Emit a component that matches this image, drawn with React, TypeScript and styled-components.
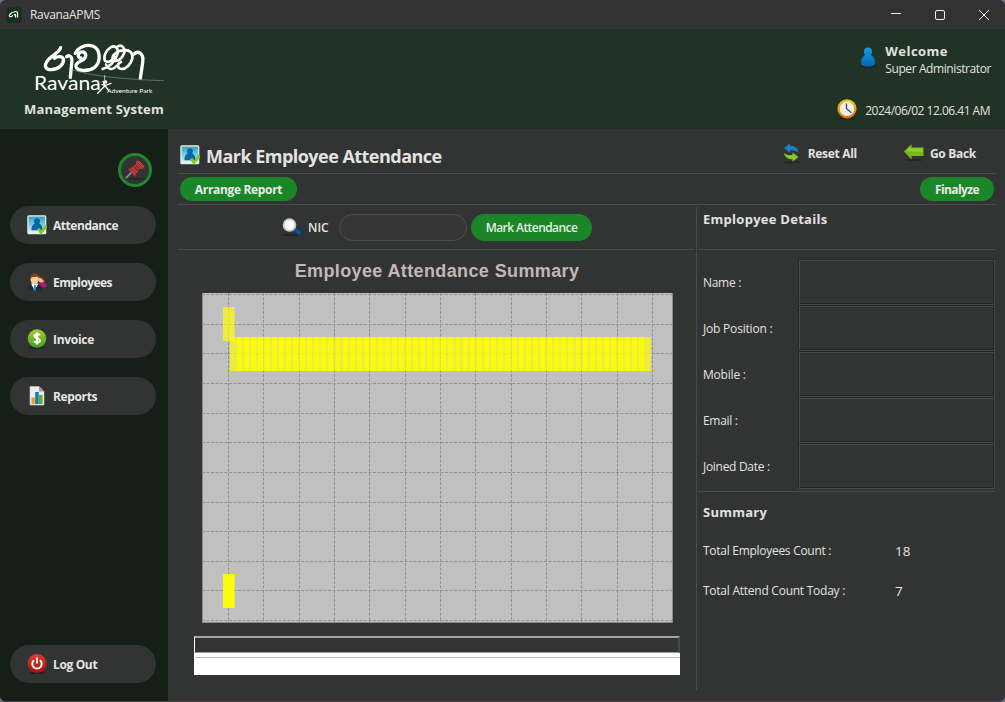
import React from "react";
import styled, { createGlobalStyle } from "styled-components";

const Global = createGlobalStyle`
  * { box-sizing: border-box; }
  html, body { margin: 0; padding: 0; overflow: hidden; background: #6f7488; }
  body { font-family: "Open Sans", "Noto Sans", sans-serif; color: #e2e2e2; font-size: 12px; }
  svg { display: block; flex: none; }
`;

const Window = styled.div`
  width: 1005px; height: 702px; display: flex; flex-direction: column;
  background: #323433; border-bottom: 1px solid #4b4142; border-radius: 6px; overflow: hidden;
`;
const TitleBar = styled.div`
  height: 29px; flex: none; display: flex; align-items: center; background: #333333; padding: 0 9px 0 6px;
`;
const WindowTitle = styled.div`
  margin-left: 8px; letter-spacing: -.3px; line-height: 18px;
`;
const WindowButtons = styled.div`
  margin-left: auto; display: flex; gap: 28px; align-items: center; padding-right: 4px;
`;
const Header = styled.header`
  height: 100px; flex: none; background: #203324; display: flex; justify-content: space-between;
`;
const Brand = styled.div`
  padding: 11px 0 0 24px; display: flex; flex-direction: column;
`;
const LogoSvg = styled.svg`margin-left: 4px;`;
const Session = styled.div`
  padding: 13px 13px 0 0; display: flex; flex-direction: column;
`;
const SessionRow = styled.div<{ $top?: number; $gap: number; $right?: number }>`
  display: flex; align-items: center; justify-content: flex-end; gap: ${p => p.$gap}px;
  margin-top: ${p => p.$top ?? 0}px; padding-right: ${p => p.$right ?? 0}px;
`;
const UserMark = styled.div`padding-bottom: 5px;`;
const Label = styled.div<{ $size?: number; $bold?: number; $track?: number; $line?: number; $width?: number; $drop?: number }>`
  font-size: ${p => p.$size ?? 12}px; font-weight: ${p => p.$bold ?? 400}; letter-spacing: ${p => p.$track ?? 0}px;
  line-height: ${p => p.$line ?? 18}px; white-space: nowrap; padding-top: ${p => p.$drop ?? 0}px;
  ${p => p.$width ? `width: ${p.$width}px; flex: none;` : ""}
`;
const Body = styled.div`flex: 1; display: flex; min-height: 0;`;
const Sidebar = styled.nav`
  width: 168px; flex: none; background: #161f17; padding: 24px 12px 18px 10px; display: flex; flex-direction: column;
`;
const PinButton = styled.button`
  width: 34px; height: 34px; border-radius: 50%; border: 3px solid #1d8729; background: #323433;
  padding: 0; margin: 0 4px 19px auto; display: grid; place-items: center; flex: none;
`;
const NavButton = styled.button<{ $last?: boolean }>`
  width: 146px; height: 38px; flex: none; border: 0; border-radius: 19px; background: #323433; color: #e6e6e6;
  font: 700 12px/18px "Open Sans", "Noto Sans", sans-serif; display: flex; align-items: center; gap: 6px;
  padding: 0 0 0 17px; margin: ${p => p.$last ? "auto 0 0" : "0 0 19px"}; text-align: left;
`;
const NavText = styled.span<{ $track: number }>`letter-spacing: ${p => p.$track}px; padding-top: 1px;`;
const Main = styled.main`flex: 1; padding: 0 9px 0 10px; display: flex; flex-direction: column;`;
const Heading = styled.div`
  height: 45px; border-bottom: 1px solid #4a4c4b; display: flex; align-items: center; padding: 8px 20px 0 2px;
`;
const PageTitle = styled.h1`
  margin: 0 auto 0 6px; padding-top: 2px; font-size: 18px; font-weight: 700; line-height: 24px; letter-spacing: -.53px; white-space: nowrap;
`;
const Tool = styled.div<{ $left: number }>`
  display: flex; align-items: center; gap: 6px; margin: -4px 0 0 ${p => p.$left}px;
`;
const Actions = styled.div`
  height: 31px; border-bottom: 1px solid #4a4c4b; display: flex; justify-content: space-between;
  align-items: center; padding: 0 2px;
`;
const GreenButton = styled.button<{ $w: number; $h: number; $weight: number; $track: number }>`
  width: ${p => p.$w}px; height: ${p => p.$h}px; border: 0; border-radius: 14px; background: #1b8627; color: #e8eee8;
  font: ${p => p.$weight} 12px/18px "Open Sans", "Noto Sans", sans-serif; letter-spacing: ${p => p.$track}px; padding: 2px 0 0; white-space: nowrap;
`;
const Columns = styled.div`flex: 1; display: flex; min-height: 0;`;
const ChartColumn = styled.section`width: 518px; display: flex; flex-direction: column; flex: none;`;
const SearchRow = styled.div`
  height: 45px; border-bottom: 1px solid #4a4c4b; display: flex; align-items: center; padding-left: 104px; margin-right: 2px; flex: none;
`;
const NicLabel = styled.label`
  width: 31px; padding: 2px 0 0 6px; font-weight: 600; line-height: 18px; white-space: nowrap;
`;
const NicInput = styled.input`
  width: 128px; height: 27px; border: 1px solid #4e4f4f; border-radius: 14px; background: #363636; margin: 0 4px 0 6px; padding: 0 10px; color: #e2e2e2;
`;
const ChartTitle = styled.h2`
  margin: 11px 0 0; height: 32px; text-align: center; font: 700 18px/20px "Liberation Sans", Arial, sans-serif; color: #c3b8b8; letter-spacing: .38px;
`;
const Plot = styled.div`margin-left: 24px; height: 330px;`;
const Legend = styled.div`
  margin: 13px 0 0 16px; width: 486px; height: 39px; background: #fff; display: flex; flex-direction: column;
`;
const LegendBox = styled.div`
  height: 17px; background: #323433; border-top: 2px solid #a3a4a3; border-left: 1px solid #fff; border-right: 2px solid #494b4a; border-bottom: 1px solid #969896;
`;
const LegendLine = styled.div`height: 1px; background: #b9b9b9; margin: 4px 0 0 1px;`;
const Details = styled.section`
  margin: 2px 1px 11px 0; border-left: 1px solid #4a4c4b; flex: 1; padding-left: 1px; display: flex; flex-direction: column;
`;
const DetailTitle = styled.div<{ $h: number; $top: number; $line?: boolean }>`
  height: ${p => p.$h}px; flex: none; padding: ${p => p.$top}px 0 0 5px; border-bottom: ${p => p.$line ? "1px solid #4a4c4b" : "0"};
`;
const Fields = styled.div`
  height: 242px; flex: none; border-bottom: 1px solid #4a4c4b; padding: 9px 0 0 5px; display: flex; flex-direction: column;
`;
const Field = styled.div`height: 46px; display: flex; align-items: center;`;
const ValueBox = styled.div`
  width: 197px; height: 46px; margin-left: auto; border: 1px solid #242625; border-right-color: #484a49; border-bottom-color: #484a49;
  display: flex;
`;
const ValueInner = styled.div`flex: 1; border: 1px solid #484a49; border-right-color: #242625; border-bottom-color: #242625;`;
const CountRow = styled.div`height: 40px; display: flex; align-items: center; padding-left: 5px;`;

function Logo() {
  return (
    <LogoSvg width="140" height="58" viewBox="84 120 420 174">
      <g fill="none" stroke="#fff" strokeLinecap="round" strokeLinejoin="round" strokeWidth="10">
        <path d="M182 143C178 158 156 166 144 180C130 198 136 209 154 209C177 208 193 192 190 177C187 168 173 168 163 175" />
        <path d="M200 170C211 162 218 173 215 190L211 232" />
        <path d="M226 160C233 142 258 132 278 138C303 148 303 185 284 202C265 216 231 214 228 199C226 186 244 185 252 177C262 167 256 153 244 156C232 160 232 174 243 174" />
        <path strokeWidth="8" d="M308 207C330 200 345 184 352 164C357 145 346 134 332 142C318 150 309 170 315 182C325 191 338 180 344 171" />
        <path strokeWidth="8" d="M350 142C365 129 377 145 372 160C367 176 350 188 340 180C332 166 353 151 370 151C391 148 399 160 397 175C392 194 379 207 365 207C351 206 350 191 363 186" />
        <path strokeWidth="7" d="M318 193C325 211 340 211 350 197" />
        <path d="M401 163C417 149 432 162 428 188L421 235" />
        <path stroke="#7f9083" strokeWidth="2" d="M215 209C270 227 365 238 490 242" />
        <path strokeWidth="4" d="M293 280L315 257L309 244M315 257L333 250M315 257L327 273M306 253L315 257" />
        <path strokeWidth="2" d="M314 226V254" />
      </g>
      <circle cx="317" cy="246" r="5" fill="#fff" />
      <text x="102" y="269" fill="#fff" fontFamily="Lato" fontSize="58" textLength="200" lengthAdjust="spacingAndGlyphs">Ravana</text>
      <text x="321" y="280" fill="#fff" fontFamily="Lato" fontSize="19" textLength="136" lengthAdjust="spacingAndGlyphs">Adventure Park</text>
    </LogoSvg>
  );
}

function AttendanceIcon() {
  return (
    <svg width="20" height="20" viewBox="0 0 20 20">
      <defs><linearGradient id="sky" x2="0" y2="1"><stop stopColor="#35a4bd" /><stop offset="1" stopColor="#b5edf4" /></linearGradient></defs>
      <rect x=".3" y=".3" width="19" height="19" rx="1.5" fill="#e8eeee" />
      <rect x="1.6" y="1.6" width="16.5" height="14.6" fill="url(#sky)" />
      <path d="M10 3.2c-3 0-3.8 3-2.2 5.3C5 9.8 4.3 12 4.5 15.2h11c.2-3.2-.5-5.4-3.3-6.7C13.8 6.2 13 3.2 10 3.2Z" fill="#0a63ad" />
      <path d="m11 13.500 3 4 5.500-7" fill="none" stroke="#80c91e" strokeWidth="2.8" />
    </svg>
  );
}
function PinIcon() {
  return (
    <svg width="22" height="22" viewBox="0 0 22 22">
      <ellipse cx="12" cy="20" rx="8" ry="1" fill="#242525" />
      <path d="m2 19 6-6" stroke="#999" strokeWidth="1.4" />
      <path d="m4 10 3-1 5-4 0-3 3-.7 6 6-2 2.5-3 .2-4 5-.5 3Z" fill="#a93431" />
      <path d="m5 10 6 6M8 8.500l6 5M12 5l4.500 4.500M14 3l5 5" stroke="#c94a44" />
      <path d="m10 8 4 4M12 6l4 4" stroke="#7b2323" />
    </svg>
  );
}
function EmployeesIcon() {
  return (
    <svg width="20" height="20" viewBox="0 0 20 20">
      <path d="M11 16c-.5-5 2-5.500 5-5.500 3 0 4 2 3.500 4.500Z" fill="#b31889" />
      <circle cx="14.500" cy="7.300" r="3.300" fill="#f4bd83" /><path d="M12 6c1-4 5-4 6 0v4c-2-1-2-3-4-4Z" fill="#5b281d" />
      <path d="M.5 18.500c-.5-5 2-7 7-7s8 2 7 7Z" fill="#25292d" /><path d="m4 11.500 3.500 7 4-7Z" fill="#fff" /><path d="m7.200 13-1 5.500h3L8.700 13Z" fill="#168ecc" />
      <ellipse cx="7.500" cy="7.500" rx="4" ry="4.800" fill="#f8cf9b" /><path d="M3 7C2 0 12-1 12.500 6L11 4.600 5 5.300Z" fill="#73401b" />
    </svg>
  );
}
function InvoiceIcon() {
  return (
    <svg width="20" height="20" viewBox="0 0 20 20">
      <defs><linearGradient id="lime" x2="0" y2="1"><stop stopColor="#a3cf2c" /><stop offset="1" stopColor="#459f29" /></linearGradient></defs>
      <ellipse cx="10" cy="18.800" rx="9" ry="1" fill="#222" /><circle cx="10" cy="9.500" r="9.300" fill="url(#lime)" />
      <path d="M13 6.200c-1-1.200-5.400-1.600-5.600.7-.2 2.800 5.600 1.700 5.500 4.700-.1 2.600-4.800 2.100-6 .6M10 3.500v12" fill="none" stroke="#fff" strokeWidth="2" />
    </svg>
  );
}
function ReportIcon() {
  return (
    <svg width="20" height="20" viewBox="0 0 20 20">
      <path d="M3 .5h9l5 5V19H3Z" fill="#eee" stroke="#c8c8c8" strokeWidth=".6" /><path d="M12 .5v5h5Z" fill="#999" />
      <path d="M4.500 11.500h3.300V18H4.500Z" fill="#f79b14" /><path d="M8.200 6h3.500v12H8.200Z" fill="#1278c8" /><path d="M12 9h3.600v9H12Z" fill="#5fae2a" />
    </svg>
  );
}
function PowerIcon() {
  return (
    <svg width="20" height="20" viewBox="0 0 20 20">
      <defs><linearGradient id="red" x2="0" y2="1"><stop stopColor="#df3c32" /><stop offset="1" stopColor="#a90f0c" /></linearGradient></defs>
      <ellipse cx="10" cy="19" rx="8" ry="1" fill="#222" /><circle cx="10" cy="9.500" r="9.400" fill="url(#red)" />
      <path d="M7 6.200a4.700 4.700 0 1 0 6 0M10 3.500v6" fill="none" stroke="#fff" strokeWidth="1.900" />
    </svg>
  );
}
function UserIcon() {
  return (
    <svg width="16" height="21" viewBox="0 0 16 21">
      <defs><linearGradient id="blue" x2="0" y2="1"><stop stopColor="#149de0" /><stop offset="1" stopColor="#0564ae" /></linearGradient></defs>
      <ellipse cx="8" cy="19.500" rx="7.500" ry="1" fill="#17251a" />
      <path d="M8 .5C3.800.5 2.600 5 5.200 8 2 9.500 1 12.200 1 16c0 2 1.500 3.500 7 3.500s7-1.500 7-3.500c0-3.800-1-6.500-4.200-8C13.400 5 12.200.5 8 .5Z" fill="url(#blue)" />
    </svg>
  );
}
function ClockIcon() {
  return (
    <svg width="20" height="21" viewBox="0 0 20 21">
      <defs><linearGradient id="gold" x2="0" y2="1"><stop stopColor="#f5c01d" /><stop offset="1" stopColor="#df7413" /></linearGradient></defs>
      <ellipse cx="10" cy="19.500" rx="8" ry="1" fill="#17251a" /><circle cx="10" cy="9.800" r="8.400" fill="#f1f1f1" stroke="url(#gold)" strokeWidth="2.400" />
      <path d="M9.500 4.500v5.300l5 4" fill="none" stroke="#4a4a4a" strokeWidth="1.300" />
    </svg>
  );
}
function SearchIcon() {
  return (
    <svg width="20" height="19" viewBox="0 0 20 19">
      <ellipse cx="9" cy="17" rx="8.500" ry="1" fill="#222" /><path d="m12 11 6.500 5" stroke="#0b4fa2" strokeWidth="4" />
      <circle cx="7.500" cy="7" r="5.900" fill="#fafafa" stroke="#c9c9c9" strokeWidth="1.800" />
    </svg>
  );
}
function ResetIcon() {
  return (
    <svg width="19" height="21" viewBox="0 0 19 21">
      <ellipse cx="9" cy="19.300" rx="8" ry="1" fill="#242525" />
      <path d="M1 5 7 .5V3c5-.5 8 2 8.500 7-2-2.200-5-3-8.500-2.700V10Z" fill="#1580c4" />
      <path d="m15.500 14-6 4.700v-2.500C5 16.500 2 14.500 1 10c3 2 5 2.400 8.500 2v-2.500Z" fill="#86c72b" />
    </svg>
  );
}
function BackIcon() {
  return (
    <svg width="20" height="18" viewBox="0 0 20 18">
      <ellipse cx="10" cy="16" rx="9" ry="1" fill="#242525" />
      <path d="M0 7.500 7.500.3V3.500h12v8.500h-12v3.500Z" fill="#78b71e" /><path d="M1.500 7.300 7 2V4.500h11.500v3.500Z" fill="#90cb2a" />
    </svg>
  );
}

const columns = [26, 61, 97, 132, 167, 203, 238, 273, 309, 344, 379, 415, 450];
const lines = [1, 31, 60, 90, 120, 149, 179, 209, 238, 268, 297, 327];
const bars = Array.from({ length: 59 }, (_, i) => Math.round(27.6 + i * 7.06));

function AttendanceChart() {
  return (
    <svg width="471" height="330" viewBox="0 0 471 330">
      <rect x=".5" y=".5" width="470" height="329" fill="#c0c0c0" stroke="#8b8b8b" />
      <path d="M1 .5H470" stroke="#c0c0c0" />
      <g stroke="#919191" strokeDasharray="3 1.5">
        {columns.map(x => <path key={x} d={`M${x + .5} 0V329`} />)}
        {lines.map(y => <path key={y} d={`M0 ${y + .5}H470`} />)}
      </g>
      <g fill="#ffff00">
        <rect x="21" y="14" width="11.5" height="34" opacity=".7" />
        {bars.map(x => <rect key={x} x={x} y="44" width="12" height="34" opacity=".7" />)}
        <rect x="21" y="281" width="11.7" height="34" opacity=".92" />
      </g>
    </svg>
  );
}

const nav = [
  { text: "Attendance", icon: <AttendanceIcon />, track: -0.45 },
  { text: "Employees", icon: <EmployeesIcon />, track: -0.58 },
  { text: "Invoice", icon: <InvoiceIcon />, track: -0.3 },
  { text: "Reports", icon: <ReportIcon />, track: -0.36 },
];
const fields: [string, number][] = [["Name :", -0.3], ["Job Position :", -0.2], ["Mobile :", -0.2], ["Email :", -0.3], ["Joined Date :", -0.3]];

export default function App() {
  return (
    <Window>
      <Global />
      <TitleBar>
        <svg width="16" height="16" viewBox="0 0 16 16">
          <rect width="16" height="16" rx="3" fill="#1b3021" />
          <path d="M6.500 5C5.500 6.500 3 7.500 3.300 9c.7 1.200 3.200.7 3.500-1M8 8c1-1 1.500-.5 1.500.5v2M7.500 5.500C9 4 11 4.300 11.500 5.500v5" fill="none" stroke="#fff" strokeWidth="1.200" />
        </svg>
        <WindowTitle>RavanaAPMS</WindowTitle>
        <WindowButtons>
          <svg width="16" height="16" viewBox="0 0 16 16" stroke="#eee"><path d="M3 6.500h10" /></svg>
          <svg width="16" height="16" viewBox="0 0 16 16" stroke="#eee" fill="none"><rect x="3.500" y="3.500" width="9" height="9" rx="1.500" /></svg>
          <svg width="16" height="16" viewBox="0 0 16 16" stroke="#eee"><path d="m3 3 10 10M13 3 3 13" /></svg>
        </WindowButtons>
      </TitleBar>
      <Header>
        <Brand>
          <Logo />
          <Label $size={13} $bold={700} $line={22} $track={0.19}>Management System</Label>
        </Brand>
        <Session>
          <SessionRow $gap={9} $right={1}>
            <UserMark><UserIcon /></UserMark>
            <div>
              <Label $size={13} $bold={700} $track={0.45}>Welcome</Label>
              <Label $track={-0.41}>Super Administrator</Label>
            </div>
          </SessionRow>
          <SessionRow $gap={8} $top={21} $right={2}>
            <ClockIcon />
            <Label $track={-0.5} $drop={3}>2024/06/02 12.06.41 AM</Label>
          </SessionRow>
        </Session>
      </Header>
      <Body>
        <Sidebar>
          <PinButton><PinIcon /></PinButton>
          {nav.map(n => <NavButton key={n.text}>{n.icon}<NavText $track={n.track}>{n.text}</NavText></NavButton>)}
          <NavButton $last><PowerIcon /><NavText $track={-0.36}>Log Out</NavText></NavButton>
        </Sidebar>
        <Main>
          <Heading>
            <AttendanceIcon />
            <PageTitle>Mark Employee Attendance</PageTitle>
            <Tool $left={0}><ResetIcon /><Label $bold={700} $track={-0.3} $drop={2}>Reset All</Label></Tool>
            <Tool $left={47}><BackIcon /><Label $bold={700} $track={-0.3} $drop={2}>Go Back</Label></Tool>
          </Heading>
          <Actions>
            <GreenButton $w={117} $h={24} $weight={700} $track={-0.33}>Arrange Report</GreenButton>
            <GreenButton $w={74} $h={24} $weight={700} $track={-0.6}>Finalyze</GreenButton>
          </Actions>
          <Columns>
            <ChartColumn>
              <SearchRow>
                <SearchIcon />
                <NicLabel>NIC</NicLabel>
                <NicInput />
                <GreenButton $w={121} $h={27} $weight={600} $track={-0.56}>Mark Attendance</GreenButton>
              </SearchRow>
              <ChartTitle>Employee Attendance Summary</ChartTitle>
              <Plot><AttendanceChart /></Plot>
              <Legend><LegendBox /><LegendLine /></Legend>
            </ChartColumn>
            <Details>
              <DetailTitle $h={43} $top={3} $line><Label $size={13} $bold={700} $track={0.27}>Emplopyee Details</Label></DetailTitle>
              <Fields>
                {fields.map(([name, track]) => (
                  <Field key={name}>
                    <Label $track={track} $drop={2}>{name}</Label>
                    <ValueBox><ValueInner /></ValueBox>
                  </Field>
                ))}
              </Fields>
              <DetailTitle $h={39} $top={11}><Label $size={13} $bold={700} $track={0.25}>Summary</Label></DetailTitle>
              <CountRow><Label $width={192} $track={-0.28}>Total Employees Count :</Label><Label $size={13.500}>18</Label></CountRow>
              <CountRow><Label $width={192} $track={-0.25}>Total Attend Count Today :</Label><Label $size={13.500}>7</Label></CountRow>
            </Details>
          </Columns>
        </Main>
      </Body>
    </Window>
  );
}
